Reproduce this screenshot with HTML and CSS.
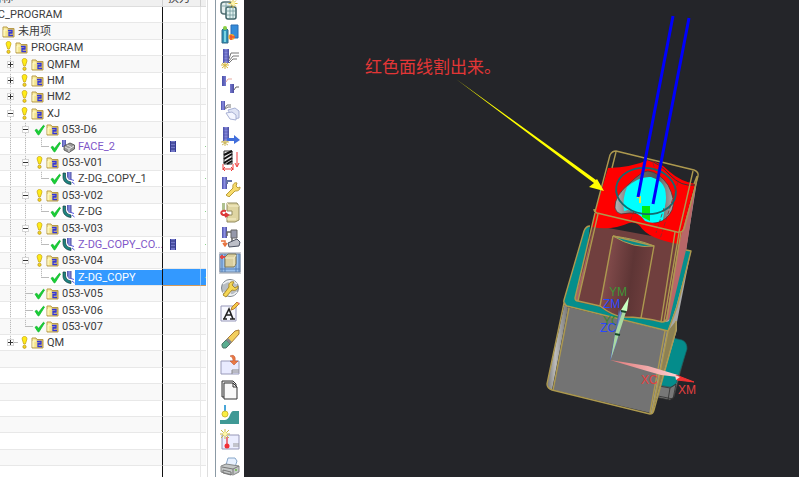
FILE: index.html
```html
<!DOCTYPE html>
<html lang="zh-CN">
<head>
<meta charset="utf-8">
<title>NC Program Navigator</title>
<link rel="stylesheet" href="styles.css">
</head>
<body>
<svg class="defs" aria-hidden="true">
  <defs>
    <linearGradient id="gold" x1="0" x2="1"><stop offset="0" stop-color="#fff5a8"/><stop offset="1" stop-color="#d9bd5a"/></linearGradient>
    <linearGradient id="post" x1="0" x2="1"><stop offset="0" stop-color="#4b50a8"/><stop offset=".5" stop-color="#8d90e4"/><stop offset="1" stop-color="#4a4da0"/></linearGradient>
    <symbol id="folder" viewBox="0 0 13 13"><path d="M1 2h4l1 1.500h6v8.500H1z" fill="url(#gold)" stroke="#b89b48"/><path d="M2 11V5h3" fill="none" stroke="#fffbd0"/><path d="M6 5.500h4v2H7v3h4M7 8h3.500" fill="none" stroke="#3436d8" stroke-width="1.300"/></symbol>
    <symbol id="warn" viewBox="0 0 13 13"><path d="M6.500.500C4.500.500 4 1.800 4.200 3.200L5.700 8h1.700l1.500-4.800C9 1.800 8.500.500 6.500.500z" fill="#ffec16" stroke="#c9a71c" stroke-width=".8"/><circle cx="6.500" cy="10.800" r="1.600" fill="#f8d818" stroke="#b8961c" stroke-width=".8"/></symbol>
    <symbol id="ok" viewBox="0 0 13 13"><path d="M2 7.200l1.800-1 1.700 2.300 5-6.300 1 .8L6 11.800H5z" fill="#18cf35" stroke="#12b92d" stroke-width=".8"/></symbol>
    <symbol id="mill" viewBox="0 0 13 13"><path d="M1 1v4c0 4 3 7 8 7.500V10C6 9.500 4 8 3.500 5V1z" fill="#1c8580" stroke="#173c40" stroke-width=".7"/><path d="M5 0h4.500v8H7L5 5z" fill="url(#post)"/><path d="M9 7.500l3 1M10 10l2.500 2" stroke="#5555e0"/></symbol>
    <symbol id="face" viewBox="0 0 13 13"><path d="M0 0h4v7H0z" fill="url(#post)"/><path d="M2 6l6-3 4.500 2v4L7 12.500l-5-2.500z" fill="#989898" stroke="#484848" stroke-width=".8"/><path d="M3 7l4 2 5-3M7 9v3M5 5l4 2" fill="none" stroke="#e2e2e2"/></symbol>
    <symbol id="cutter" viewBox="0 0 6 11"><path d="M0 0h6v11H0z" fill="#7377c8"/><path d="M0 0h1v11H0zM5 0h1v11H5z" fill="#343b94"/><path d="M1 2h4M1 5h4M1 8h4" stroke="#272e78"/></symbol>
    <symbol id="tool" viewBox="0 0 22 22"><path d="M1 0h6v14H1z" fill="url(#post)"/><path d="M1 2h6M1 5h6M1 8h6M1 11h6" stroke="#4b4e9e" stroke-width=".6"/></symbol>
  </defs>
</svg>

<main class="app">
  <section class="navigator" aria-label="程序顺序视图">
    <table class="tree">
      <colgroup><col class="c-name"><col class="c-change"><col class="c-path"></colgroup>
      <thead><tr><th><div class="head">名称</div></th><th><div class="head second">换刀</div></th><th><div class="head"></div></th></tr></thead>
      <tbody>
        <tr><td><div class="node root">NC_PROGRAM</div></td><td></td><td></td></tr>
        <tr><td><div class="node"><svg class="ic"><use href="#folder"/></svg><span>未用项</span></div></td><td></td><td></td></tr>
        <tr><td><div class="node"><svg class="ic"><use href="#warn"/></svg><svg class="ic"><use href="#folder"/></svg><span>PROGRAM</span></div></td><td></td><td></td></tr>
        <tr><td><div class="node"><i class="g line"><button class="plus" aria-label="展开 QMFM"></button></i><svg class="ic"><use href="#warn"/></svg><svg class="ic"><use href="#folder"/></svg><span>QMFM</span></div></td><td></td><td></td></tr>
        <tr><td><div class="node"><i class="g line"><button class="plus" aria-label="展开 HM"></button></i><svg class="ic"><use href="#warn"/></svg><svg class="ic"><use href="#folder"/></svg><span>HM</span></div></td><td></td><td></td></tr>
        <tr><td><div class="node"><i class="g line"><button class="plus" aria-label="展开 HM2"></button></i><svg class="ic"><use href="#warn"/></svg><svg class="ic"><use href="#folder"/></svg><span>HM2</span></div></td><td></td><td></td></tr>
        <tr><td><div class="node"><i class="g line"><button aria-label="折叠 XJ"></button></i><svg class="ic"><use href="#warn"/></svg><svg class="ic"><use href="#folder"/></svg><span>XJ</span></div></td><td></td><td></td></tr>
        <tr><td><div class="node"><i class="g line"></i><i class="g b line"><button aria-label="折叠 053-D6"></button></i><svg class="ic"><use href="#ok"/></svg><svg class="ic"><use href="#folder"/></svg><span>053-D6</span></div></td><td></td><td></td></tr>
        <tr><td><div class="node"><i class="g line"></i><i class="g b line"></i><i class="g elbow"></i><svg class="ic"><use href="#ok"/></svg><svg class="ic"><use href="#face"/></svg><span class="stale">FACE_2</span></div></td><td><svg class="cut"><use href="#cutter"/></svg></td><td class="path"></td></tr>
        <tr><td><div class="node"><i class="g line"></i><i class="g b line"><button aria-label="折叠 053-V01"></button></i><svg class="ic"><use href="#warn"/></svg><svg class="ic"><use href="#folder"/></svg><span>053-V01</span></div></td><td></td><td></td></tr>
        <tr><td><div class="node"><i class="g line"></i><i class="g b line"></i><i class="g elbow"></i><svg class="ic"><use href="#ok"/></svg><svg class="ic"><use href="#mill"/></svg><span>Z-DG_COPY_1</span></div></td><td></td><td class="path"></td></tr>
        <tr><td><div class="node"><i class="g line"></i><i class="g b line"><button aria-label="折叠 053-V02"></button></i><svg class="ic"><use href="#warn"/></svg><svg class="ic"><use href="#folder"/></svg><span>053-V02</span></div></td><td></td><td></td></tr>
        <tr><td><div class="node"><i class="g line"></i><i class="g b line"></i><i class="g elbow"></i><svg class="ic"><use href="#ok"/></svg><svg class="ic"><use href="#mill"/></svg><span>Z-DG</span></div></td><td></td><td class="path"></td></tr>
        <tr><td><div class="node"><i class="g line"></i><i class="g b line"><button aria-label="折叠 053-V03"></button></i><svg class="ic"><use href="#warn"/></svg><svg class="ic"><use href="#folder"/></svg><span>053-V03</span></div></td><td></td><td></td></tr>
        <tr><td><div class="node"><i class="g line"></i><i class="g b line"></i><i class="g elbow"></i><svg class="ic"><use href="#ok"/></svg><svg class="ic"><use href="#mill"/></svg><span class="stale">Z-DG_COPY_CO...</span></div></td><td><svg class="cut"><use href="#cutter"/></svg></td><td class="path"></td></tr>
        <tr><td><div class="node"><i class="g line"></i><i class="g b line"><button aria-label="折叠 053-V04"></button></i><svg class="ic"><use href="#warn"/></svg><svg class="ic"><use href="#folder"/></svg><span>053-V04</span></div></td><td></td><td></td></tr>
        <tr class="selected"><td><div class="node"><i class="g line"></i><i class="g b line"></i><i class="g elbow"></i><svg class="ic"><use href="#ok"/></svg><svg class="ic"><use href="#mill"/></svg><span>Z-DG_COPY</span></div></td><td></td><td class="path"></td></tr>
        <tr><td><div class="node"><i class="g line"></i><i class="g b line tee"></i><svg class="ic"><use href="#ok"/></svg><svg class="ic"><use href="#folder"/></svg><span>053-V05</span></div></td><td></td><td></td></tr>
        <tr><td><div class="node"><i class="g line"></i><i class="g b line tee"></i><svg class="ic"><use href="#ok"/></svg><svg class="ic"><use href="#folder"/></svg><span>053-V06</span></div></td><td></td><td></td></tr>
        <tr><td><div class="node"><i class="g line"></i><i class="g b elbow"></i><svg class="ic"><use href="#ok"/></svg><svg class="ic"><use href="#folder"/></svg><span>053-V07</span></div></td><td></td><td></td></tr>
        <tr><td><div class="node"><i class="g elbow"><button class="plus" aria-label="展开 QM"></button></i><svg class="ic"><use href="#warn"/></svg><svg class="ic"><use href="#folder"/></svg><span>QM</span></div></td><td></td><td></td></tr>
        <tr><td></td><td></td><td></td></tr><tr><td></td><td></td><td></td></tr><tr><td></td><td></td><td></td></tr><tr><td></td><td></td><td></td></tr>
        <tr><td></td><td></td><td></td></tr><tr><td></td><td></td><td></td></tr><tr><td></td><td></td><td></td></tr><tr><td></td><td></td><td></td></tr>
      </tbody>
    </table>
  </section>

  <nav class="toolbar" aria-label="工具">
    <button aria-label="几何视图"><svg viewBox="0 0 22 22"><rect x="2" y="4" width="11" height="12" rx="3" fill="#e4eeee" stroke="#547276" stroke-width="1.500"/><rect x="7" y="9" width="10" height="12" rx="2" fill="#dff0ef" stroke="#3e6266" stroke-width="1.500"/><path d="M3 8h8M7 5v9M8 13h8M8 17h8M11 10v10M14 10v10" stroke="#70989a" stroke-width=".8"/><path d="M14 1v9M9.500 5.500h9M11 2.500l6 6M17 2.500l-6 6" stroke="#d9bd42"/><circle cx="14" cy="5.500" r="2" fill="#fff5a8"/></svg></button>
    <button aria-label="创建刀具"><svg viewBox="0 0 22 22"><path d="M3 7l3-3 3 3v13H3z" fill="#2e92b7" stroke="#326987"/><path d="M5 8h2v11H5z" fill="#7bd3e2"/><circle cx="6" cy="5" r="2" fill="#8ccf42"/><path d="M12 2h7v13h-7z" fill="#348bd9" stroke="#286cb4"/><circle cx="12.500" cy="14" r="3" fill="#f0a32d"/><path d="M11 14h5M12 12v5" stroke="#ed522f" stroke-width="1.500"/></svg></button>
    <button aria-label="创建工序"><svg viewBox="0 0 22 22"><use href="#tool" x="3" y="1"/><path d="M10 11l2-6h8M10 13l4-5h6M10 15l4-4h4" fill="none" stroke="#777"/><path d="M2 17h8M6 14v7M3 15l6 5M9 15l-6 5" stroke="#d5b83e"/></svg></button>
    <button aria-label="变换对象"><svg viewBox="0 0 22 22"><path d="M3 2h4v10H3zM11 10h4v9h-4z" fill="url(#post)"/><path d="M7 8l2-3h4" fill="none" stroke="#e5a9a1"/><path d="M15 16l2-3h3" fill="none" stroke="#666"/></svg></button>
    <button aria-label="复制对象"><svg viewBox="0 0 22 22"><path d="M2 2h4v9H2z" fill="url(#post)"/><path d="M6 9l2-3h4M6 10l3-2h3" fill="none" stroke="#777"/><path d="M9 11l7-2 4 3v7l-6 1z" fill="#dfe4f5" stroke="#a8b1d4"/><path d="M7 14l6-1 4 3v5l-6-1z" fill="#f4f6ff" stroke="#a8b1d4"/></svg></button>
    <button aria-label="生成刀轨"><svg viewBox="0 0 22 22"><use href="#tool" x="3" y="2"/><path d="M8 13h7v-3l6 5-6 4v-3H8z" fill="#406edb"/><path d="M2 17h8M6 15v6M3 16l6 4M9 16l-6 4" stroke="#cdb85d"/></svg></button>
    <button aria-label="切削深度"><svg viewBox="0 0 22 22"><path d="M5 1h8v13H5z" fill="#eee" stroke="#333"/><path d="M5 5l8-4M5 9l8-5M5 13l8-5M8 14l5-3" stroke="#111" stroke-width="2"/><path d="M18 2v14M16 13l2 4 2-4M4 14v6M14 14v6M4 19h10M6 17l-2 2 2 2M12 17l2 2-2 2" fill="none" stroke="#ef3b39"/></svg></button>
    <button aria-label="编辑工序"><svg viewBox="0 0 22 22"><path d="M3 2h5v12H3z" fill="url(#post)"/><path d="M8 9V6h5" fill="none" stroke="#6674a6" stroke-width="2"/><path d="M7 20l7-7c-1-4 2-6 4-5l-1 3 2 2 2-1c0 4-3 4-5 4l-6 6z" fill="#f8dc6b" stroke="#b99b37"/></svg></button>
    <button aria-label="机床仿真"><svg viewBox="0 0 22 22"><path d="M8 2h10l2 3v14l-4 2H8v-7h5v-4H8z" fill="#dfd5a2" stroke="#928b5e"/><path d="M8 2l2 3h10M8 18h9" fill="none" stroke="#f8f1cb"/><path d="M3 2h3v7H3z" fill="#afc18f"/><path d="M7 10c-5-1-6 2-3 4h4M6 12l3 2-3 2" fill="none" stroke="#db3939" stroke-width="2"/></svg></button>
    <button aria-label="后处理"><svg viewBox="0 0 22 22"><path d="M3 1h5v11H3z" fill="url(#post)"/><path d="M8 10V6h5v10" fill="none" stroke="#666" stroke-width="1.500"/><path d="M12 4h6v8h-6z" fill="#9598aa" stroke="#666"/><path d="M9 17l9-4 3 3-1 4-10 1z" fill="#bdbfc8" stroke="#4e5363"/><path d="M2 15h4v4M4 17l2 3 2-3" fill="none" stroke="#e8733f" stroke-width="1.500"/></svg></button>
    <button class="active" aria-label="机床视图" aria-pressed="true"><svg viewBox="0 0 22 22"><path d="M1 2h20v18H1z" fill="#9ac2ef" stroke="#768da9"/><path d="M3 2v18M6 2v18M17 2v18M20 2v18M1 17h20" stroke="#547fb6"/><path d="M6 5l3-3h8v10l-2 3H6z" fill="#d9ce9e" stroke="#827a57"/><path d="M6 6h9v8M15 6l2-3" fill="none" stroke="#f5edc8"/><path d="M1 5h5M3 3v4" stroke="#dc4747" stroke-width="2"/></svg></button>
    <button aria-label="设置"><svg viewBox="0 0 22 22"><circle cx="11" cy="11" r="8.500" fill="#b8bec4" stroke="#7d858d"/><path d="M4 7c5-4 10-4 14 0M4 15c5 4 10 4 14 0M11 3v16" fill="none" stroke="#edf0f2" stroke-width="1.500"/><path d="M4 18l6-8c-1-4 2-6 5-5l-2 3 3 3 3-2c0 4-3 5-6 4l-6 7z" fill="#f5d755" stroke="#a98a2d"/></svg></button>
    <button aria-label="编辑文本"><svg viewBox="0 0 22 22"><path d="M2 4h15v15H2z" fill="#f8f9ff" stroke="#9697ba"/><path d="M5 17L10 7l4 10M7 13h6M4 17h4M11 17h5" fill="none" stroke="#222" stroke-width="1.600"/><path d="M12 8l1-3 5-5 2 2-5 5z" fill="#f4c947" stroke="#b87e35"/><path d="M18 0l3 1-1 2z" fill="#e67a72"/></svg></button>
    <button aria-label="删除"><svg viewBox="0 0 22 22"><path d="M7 12L16 3l4-1v4l-9 10z" fill="#f3cf5d" stroke="#aa7b34"/><path d="M3 16l4-4 4 4-4 4H4l-1-2z" fill="#59ad91" stroke="#4e7469"/><path d="M7 12l4 4 2-2-4-4z" fill="#858b90"/></svg></button>
    <button aria-label="导入部件"><svg viewBox="0 0 22 22"><path d="M2 8h18v13H2z" fill="#e9ebff" stroke="#9899b8"/><path d="M13 17h7M13 19h7M13 17v4" stroke="#888"/><path d="M11 3c4-2 6 1 5 5h3l-4 4-4-4h3c0-3-1-4-3-5" fill="#e97944" stroke="#ba4b29" stroke-width=".5"/></svg></button>
    <button aria-label="复制"><svg viewBox="0 0 22 22"><path d="M3 2h11l3 3v13H3z" fill="#e2e2e2" stroke="#333"/><path d="M5 4h9l4 4v12H5z" fill="#f8f8f8" stroke="#333"/><path d="M14 4v4h4" fill="none" stroke="#333"/></svg></button>
    <button aria-label="切削区域"><svg viewBox="0 0 22 22"><path d="M1 20v-4h5c5 0 5-9 8-9h6v13z" fill="#3f9995"/><path d="M6 1v7" stroke="#49a6d8" stroke-width="2"/><circle cx="6" cy="10" r="3" fill="#f9ee42" stroke="#d1bc34"/></svg></button>
    <button aria-label="新建点"><svg viewBox="0 0 22 22"><path d="M3 6h17v14H3z" fill="#eceeff" stroke="#9697b7"/><path d="M14 15h6M14 17h6" stroke="#999"/><path d="M8 8v9" stroke="#e75159" stroke-width="1.500"/><circle cx="8" cy="17" r="2.500" fill="#f22e36"/><path d="M6 0v10M1 5h10M2 1l8 8M10 1L2 9" stroke="#cbb747"/><circle cx="6" cy="5" r="2" fill="#fff8a7"/></svg></button>
    <button aria-label="打印"><svg viewBox="0 0 22 22"><path d="M7 10l2-7h7l2 3-2 6z" fill="#e8f1ff" stroke="#86a6c8"/><path d="M2 11l5-2 13 2v6l-6 3L2 17z" fill="#c4c7c7" stroke="#858787"/><path d="M3 12l11 2 6-3M14 14v5M4 15l8 2v3l-8-2z" fill="none" stroke="#777"/><circle cx="17" cy="15" r="1" fill="#6bb944"/></svg></button>
  </nav>

  <section class="viewport" aria-label="图形窗口">
    <svg viewBox="244 0 555 477" preserveAspectRatio="xMinYMin meet">
      <defs>
        <linearGradient id="side" x1="0" x2="1"><stop offset="0" stop-color="#777"/><stop offset=".4" stop-color="#bbb"/><stop offset="1" stop-color="#777"/></linearGradient>
        <linearGradient id="pocket" x1="0" x2="1" y2=".2"><stop offset="0" stop-color="#93595a"/><stop offset=".25" stop-color="#7d4848"/><stop offset=".65" stop-color="#5e3535"/><stop offset="1" stop-color="#6f3f3e"/></linearGradient>
        <linearGradient id="hole" x1="0" x2="1"><stop offset="0" stop-color="#b5b5b5"/><stop offset=".3" stop-color="#6f6f6f"/><stop offset=".7" stop-color="#555"/><stop offset="1" stop-color="#aaa"/></linearGradient>
        <linearGradient id="xaxis" x1="0" x2="1"><stop offset="0" stop-color="#e07878"/><stop offset="1" stop-color="#ffd0d0"/></linearGradient>
      </defs>
      <path d="M656 386l4-23 13-25 9 3q5 2 5 6l-13 50-4 3-15-3z" fill="#777" stroke="#333" stroke-width=".7"/>
      <path d="M658 385l12 2q6-1 7-6l10-32q0-7-5-9l-9-2z" fill="#048c8b" stroke="#145f60" stroke-width=".7"/>
      <path d="M659 386l11 2 6-4-3 15-15-3M670 388l-2 12" fill="none" stroke="#303030" stroke-width=".8"/>
      <path d="M698 175L686 250l5 1-14 71v8l-25 84-5-4 34-175z" fill="#a8a8a8"/>
      <path d="M668 331l8-10v9l-24 83z" fill="#8d8153"/>
      <path d="M697 178L686 252l-15 66-7 5 15-82z" fill="#b86768"/>
      <path d="M590 226q-4 0-6 5l-20 69q-1 4 3 6l101 25 8-24 15-56-5-1-17 71q-3 2-7 0l-82-20z" fill="#048e8c"/>
      <path d="M592 225l87 16-13 77q-1 5-5 4-13-2-20-4l-19-1-13-4-11-7-20-4q-3-2-2-6z" fill="#703f3e"/>
      <path d="M583 270l-8 28q0 3 3 3l16-75z" fill="#a76464"/>
      <path d="M613 236q20 3 41 10l-13 72-19-1-22-11z" fill="url(#pocket)"/>
      <path d="M613 236q21 13 41 10-17-7-41-10z" fill="#088b89" stroke="#b09a55"/>
      <path d="M565 302l-18 82q0 5 5 6l16-82z" fill="url(#side)"/>
      <path d="M568 307l99 24-16 82-98-23z" fill="#737373"/>
      <path d="M608 168q25-1 40-8 11 1 22 12 10 9 25 12l-12 44-4 16q-31-5-39-18-5-5-11-3-18 8-37 4l3-15z" fill="#f00"/>
      <path d="M648 160q11 3 22 15t25 10" fill="none" stroke="#33383a"/>
      <path d="M615 208q-1-12 15-25 12-12 18-12 11 1 20 14 8 15 4 25-5 11-17 13-8-2-14-9-12-2-20 0-5-1-6-6z" fill="url(#hole)" stroke="#373737" stroke-width=".7"/>
      <path d="M624 211q-2-12 3-24 12-11 24-10 11 3 14 12 2 9 0 17l-2 14q-10 5-18 1-5-8-17-11z" fill="#0ff"/>
      <path d="M642 206h8v15l-8-4z" fill="#00ed12"/><path d="M637 197h3v5h1" fill="none" stroke="#e4e53c" stroke-width="2"/>
      <ellipse cx="646" cy="191" rx="30" ry="23" transform="rotate(8 646 191)" fill="none" stroke="#126b70" stroke-width="1.800"/>
      <g fill="none" stroke="#8e2828" stroke-width=".8" stroke-dasharray="4 2"><path d="M678 182l-18 57M634 211l-4 11M664 208l-8 25M653 163l2 7"/></g>
      <g fill="none" stroke="#ad994f" stroke-width="1.400" stroke-linejoin="round">
        <path d="M595 212l15-57q2-4 6-4l78 19q5 2 4 6l-14 53q-2 4-7 3l-80-19q-3-1-3-4M616 152l-4 16M693 171l-14 61M697 176l-3 8"/>
        <path d="M595 213l-20 85q0 3 3 3l22 5q13 10 23 11 20 0 39 5 4 0 5-4l14-86M598 214l-20 87M675 232l-14 90M679 233l-15 88M613 236l-13 70M613 236l41 10-13 72"/>
        <path d="M590 226q-4 0-6 5l-20 69q-1 4 3 6l101 25 9-24 14-56-5-1M564 303l-17 81q0 4 5 6l98 24q3 0 4-4l22-80v-9M569 308l-16 82M665 331l-15 82M668 331l-16 82"/>
      </g>
      <path d="M673 16l-35 181M689 18l-36 186" stroke="#0000fc" stroke-width="3" fill="none"/>
      <g class="axis-label"><text x="603" y="325" fill="#39852c">YC</text><text x="641" y="384" fill="#e34040">XC</text></g>
      <path d="M610 360l38 6 30 9v2l-17-2-14-4z" fill="url(#xaxis)"/><path d="M676 375l18 7-17-2z" fill="#f03232" stroke="#f03232"/><path d="M675 375l5 2-4 3z" fill="#ffd4d4"/>
      <path d="M610 361l9-52 2 19-6 19z" fill="#5367a7"/><path d="M610 361l6-27 4-24 2 2-5 30z" fill="#7088cb"/>
      <path d="M611 359l4-25 8-24 3 2-8 25z" fill="#a9d9a1"/><path d="M621 310l8-13-2 14-4 1z" fill="#c8ffc0"/><path d="M621 311l5 1M615 334l5 1" stroke="#19482a" stroke-width="2"/>
      <g class="axis-label"><text x="609" y="296" fill="#3e9637">YM</text><text x="603" y="308" fill="#2748ff">ZM</text><text x="600" y="332" fill="#2748ff">ZC</text><text x="678" y="394" fill="#e34040">XM</text></g>
      <path d="M456 79L594 183l-5 4 15 4-7-12-1 1z" fill="#ff0"/>
      <text class="note" x="365" y="73">红色面线割出来。</text>
    </svg>
  </section>
</main>
</body>
</html>
```

FILE: styles.css
```css
* { box-sizing: border-box; }
body {
  margin: 0;
  height: 100vh;
  overflow: hidden;
  background: #fff;
  color: #3c3c3c;
  font: 11px/16px Roboto, "Noto Sans CJK SC", sans-serif;
}
.defs { position: absolute; width: 0; height: 0; }
.app { display: flex; height: 100%; }

/* Program tree */
.navigator { flex: none; width: 208px; overflow: hidden; border-right: 1px solid #dedede; }
.tree { width: 206px; table-layout: fixed; border-collapse: separate; border-spacing: 0; }
.c-name { width: 163px; }
.c-change { width: 38px; }
th { padding: 0; background: #f0f0f0; border-right: 1px solid #d0d0d0; border-bottom: 1px solid #ddd; font-weight: normal; text-align: left; }
th:last-child { border-right: 0; }
.head { display: flex; align-items: flex-end; height: 6px; overflow: hidden; padding-left: 2px; line-height: 14px; margin-left: -11px; }
.head.second { margin-left: 3px; }
td { height: 16px; padding: 0; border-bottom: 1px solid #e8e8e8; line-height: 15px; overflow: hidden; }
tbody tr:nth-child(5n+2) td, tbody tr:nth-child(5n+4) td { height: 17px; }
tbody tr:nth-child(even) { background: #f9f9f9; }
td:first-child { border-right: 1px solid #111; }
td:nth-child(2) { border-right: 1px solid #e8e8e8; }
.node { display: flex; align-items: center; height: 15px; padding-left: 2px; white-space: nowrap; }
.node.root { padding: 0; margin-left: -10px; }
.node span { flex: 1; align-self: stretch; padding-left: 3px; }
.ic { flex: none; width: 13px; height: 13px; }
.stale { color: #8056c8; }
.cut { display: block; width: 6px; height: 11px; margin-left: 7px; }
.path { background: linear-gradient(#8bd28b, #8bd28b) right center / 1px 1px no-repeat; }

/* Guides: A and C columns are 16px, B is 15px */
.g { flex: none; display: grid; place-items: center; width: 16px; height: 17px; }
.g.b { width: 15px; }
.line { background: repeating-linear-gradient(#bbb 0 1px, #eee 1px 2px) center / 1px 100% no-repeat; }
.tee, .elbow {
  background:
    linear-gradient(#bbb, #bbb) right center / 8px 1px no-repeat,
    repeating-linear-gradient(#bbb 0 1px, #eee 1px 2px) center top / 1px 50% no-repeat;
}
.tee {
  background:
    linear-gradient(#bbb, #bbb) right center / 8px 1px no-repeat,
    repeating-linear-gradient(#bbb 0 1px, #eee 1px 2px) center / 1px 100% no-repeat;
}
.g button {
  width: 7px;
  height: 7px;
  padding: 0;
  border: 1px solid #d5d5d5;
  background: linear-gradient(#333, #333) center / 5px 1px no-repeat, #fff;
}
.g .plus { background: linear-gradient(#333, #333) center / 5px 1px no-repeat, linear-gradient(#333, #333) center / 1px 5px no-repeat, #fff; }

.selected td:nth-child(n+2) { background-color: #3399ff; border-color: #d49a5a; }
.selected td:nth-child(2) { border-right-color: #8cc6ff; }
.selected span { background: #3399ff; color: #fff; }

/* Tool strip */
.toolbar { flex: none; display: flex; flex-direction: column; width: 29px; margin-left: 7px; padding-right: 1px; overflow: hidden; border-left: 1px solid #8b9aa5; background: #fff; }
.toolbar button { flex: none; display: grid; place-items: center; height: 25px; padding: 0; border: 0; background: transparent; }
.toolbar button:first-child { margin-top: -4px; }
.toolbar button:nth-child(5n+3), .toolbar button:nth-child(5n) { height: 26px; }
.toolbar svg { width: 22px; height: 22px; }
.toolbar .active svg { background: #c9ccd2; }

/* Graphics window */
.viewport { flex: 1; min-width: 0; background: #242529; overflow: hidden; }
.viewport > svg { display: block; width: 100%; height: 100%; }
.axis-label { font: 12px "Liberation Sans", sans-serif; }
.note { font: 17px "Noto Sans CJK SC", sans-serif; fill: #e23636; }
```
